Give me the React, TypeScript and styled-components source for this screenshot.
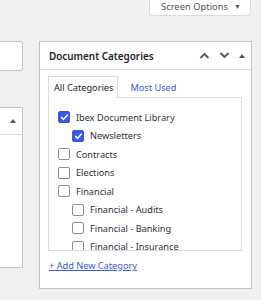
import React from "react";
import styled, { createGlobalStyle } from "styled-components";

const Global = createGlobalStyle`
  html, body { margin: 0; padding: 0; background: #f0f0f1; }
  body { font-family: "Noto Sans", "Open Sans", sans-serif; color: #3c434a; font-size: 9.2px; }
  * { box-sizing: border-box; }
`;

const Page = styled.div`
  width: 261px;
  height: 300px;
  overflow: hidden;
  display: flex;
  flex-direction: column;
`;

const TopBar = styled.div`
  display: flex;
  justify-content: flex-end;
  padding-right: 10px;
`;

const ScreenOptions = styled.div`
  width: 102px;
  height: 16px;
  background: #fff;
  border: 1px solid #dcdcde;
  border-top: none;
  border-radius: 0 0 3px 3px;
  display: flex;
  align-items: center;
  justify-content: center;
  gap: 6px;
  color: #50575e;
  font-size: 9.4px;
  padding: 0 0 2px 2px;
`;

const Caret = styled.span`
  font-size: 7px;
  color: #50575e;
`;

const Columns = styled.div`
  display: flex;
  margin-top: 25px;
  gap: 16px;
`;

const LeftCol = styled.div`
  width: 23px;
  display: flex;
  flex-direction: column;
  gap: 36px;
`;

const StubBox = styled.div`
  height: 30px;
  background: #fff;
  border: 1px solid #c3c4c7;
  border-left: none;
  border-radius: 0 3px 3px 0;
`;

const StubPanel = styled.div`
  height: 161px;
  background: #fff;
  border: 1px solid #c3c4c7;
  border-left: none;
`;

const StubHeader = styled.div`
  height: 27px;
  border-bottom: 1px solid #dcdcde;
  display: flex;
  align-items: center;
  justify-content: flex-end;
  padding-right: 6px;
`;

const Tri = styled.span`
  width: 0;
  height: 0;
  border-left: 3px solid transparent;
  border-right: 3px solid transparent;
  border-bottom: 4px solid #50575e;
`;

const Panel = styled.div`
  width: 213px;
  height: 248px;
  background: #fff;
  border: 1px solid #c3c4c7;
  display: flex;
  flex-direction: column;
`;

const PanelHeader = styled.div`
  height: 28px;
  border-bottom: 1px solid #dcdcde;
  display: flex;
  align-items: center;
  padding: 0 6px 0 9px;
`;

const Title = styled.h2`
  margin: 0;
  flex: 1;
  font-size: 9.9px;
  font-weight: 600;
  color: #1d2327;
`;

const HeaderIcons = styled.div`
  display: flex;
  align-items: center;
  gap: 9px;
`;

const Body = styled.div`
  padding: 6px 9px 0 8px;
  display: flex;
  flex-direction: column;
  align-items: stretch;
`;

const Tabs = styled.div`
  display: flex;
  align-items: flex-end;
  gap: 6px;
`;

const Tab = styled.div<{ $active?: boolean }>`
  height: 22px;
  padding: 0 4px 0 5px;
  display: flex;
  align-items: center;
  font-size: 9.2px;
  color: ${(p) => (p.$active ? "#1d2327" : "#3858e9")};
  background: ${(p) => (p.$active ? "#fff" : "transparent")};
  border: 1px solid ${(p) => (p.$active ? "#dcdcde" : "transparent")};
  border-bottom: none;
  margin-bottom: -1px;
  position: relative;
  z-index: 1;
`;

const TabPanel = styled.div`
  height: 154px;
  border: 1px solid #dcdcde;
  overflow: hidden;
  padding: 10px 0 0 9px;
`;

const List = styled.ul`
  list-style: none;
  margin: 0;
  padding: 0;
`;

const Item = styled.li<{ $depth: number }>`
  height: 18.5px;
  display: flex;
  align-items: center;
  gap: 6px;
  padding-left: ${(p) => p.$depth * 14}px;
  color: #2c3338;
  font-size: 9.2px;
  white-space: nowrap;
`;

const Box = styled.span<{ $checked?: boolean }>`
  width: 12px;
  height: 12px;
  flex: none;
  border-radius: 2px;
  border: 1px solid ${(p) => (p.$checked ? "#3858e9" : "#8c8f94")};
  background: ${(p) => (p.$checked ? "#3858e9" : "#fff")};
  display: flex;
  align-items: center;
  justify-content: center;
`;

const AddRow = styled.div`
  height: 30px;
  display: flex;
  align-items: center;
  padding-left: 1px;
`;

const AddLink = styled.a`
  font-size: 9.2px;
  line-height: 14px;
  color: #3858e9;
  text-decoration: underline;
`;

const Chevron = ({ up }: { up?: boolean }) => (
  <svg width="11" height="7" viewBox="0 0 11 7">
    <path
      d={up ? "M1.5 6 L5.5 2 L9.5 6" : "M1.5 1 L5.5 5 L9.5 1"}
      fill="none"
      stroke="#50575e"
      strokeWidth="1.8"
    />
  </svg>
);

const Check = () => (
  <svg width="9" height="8" viewBox="0 0 9 8">
    <path d="M1.2 4.2 L3.5 6.4 L7.8 1.4" fill="none" stroke="#fff" strokeWidth="1.6" />
  </svg>
);

const items: { label: string; depth: number; checked?: boolean }[] = [
  { label: "Ibex Document Library", depth: 0, checked: true },
  { label: "Newsletters", depth: 1, checked: true },
  { label: "Contracts", depth: 0 },
  { label: "Elections", depth: 0 },
  { label: "Financial", depth: 0 },
  { label: "Financial - Audits", depth: 1 },
  { label: "Financial - Banking", depth: 1 },
  { label: "Financial - Insurance", depth: 1 },
];

export default function App() {
  return (
    <Page>
      <Global />
      <TopBar>
        <ScreenOptions>
          Screen Options <Caret>▼</Caret>
        </ScreenOptions>
      </TopBar>
      <Columns>
        <LeftCol>
          <StubBox />
          <StubPanel>
            <StubHeader>
              <Tri />
            </StubHeader>
          </StubPanel>
        </LeftCol>
        <Panel>
          <PanelHeader>
            <Title>Document Categories</Title>
            <HeaderIcons>
              <Chevron up />
              <Chevron />
              <Tri />
            </HeaderIcons>
          </PanelHeader>
          <Body>
            <Tabs>
              <Tab $active>All Categories</Tab>
              <Tab>Most Used</Tab>
            </Tabs>
            <TabPanel>
              <List>
                {items.map((it) => (
                  <Item key={it.label} $depth={it.depth}>
                    <Box $checked={it.checked}>{it.checked && <Check />}</Box>
                    {it.label}
                  </Item>
                ))}
              </List>
            </TabPanel>
            <AddRow>
              <AddLink href="#">+ Add New Category</AddLink>
            </AddRow>
          </Body>
        </Panel>
      </Columns>
    </Page>
  );
}
